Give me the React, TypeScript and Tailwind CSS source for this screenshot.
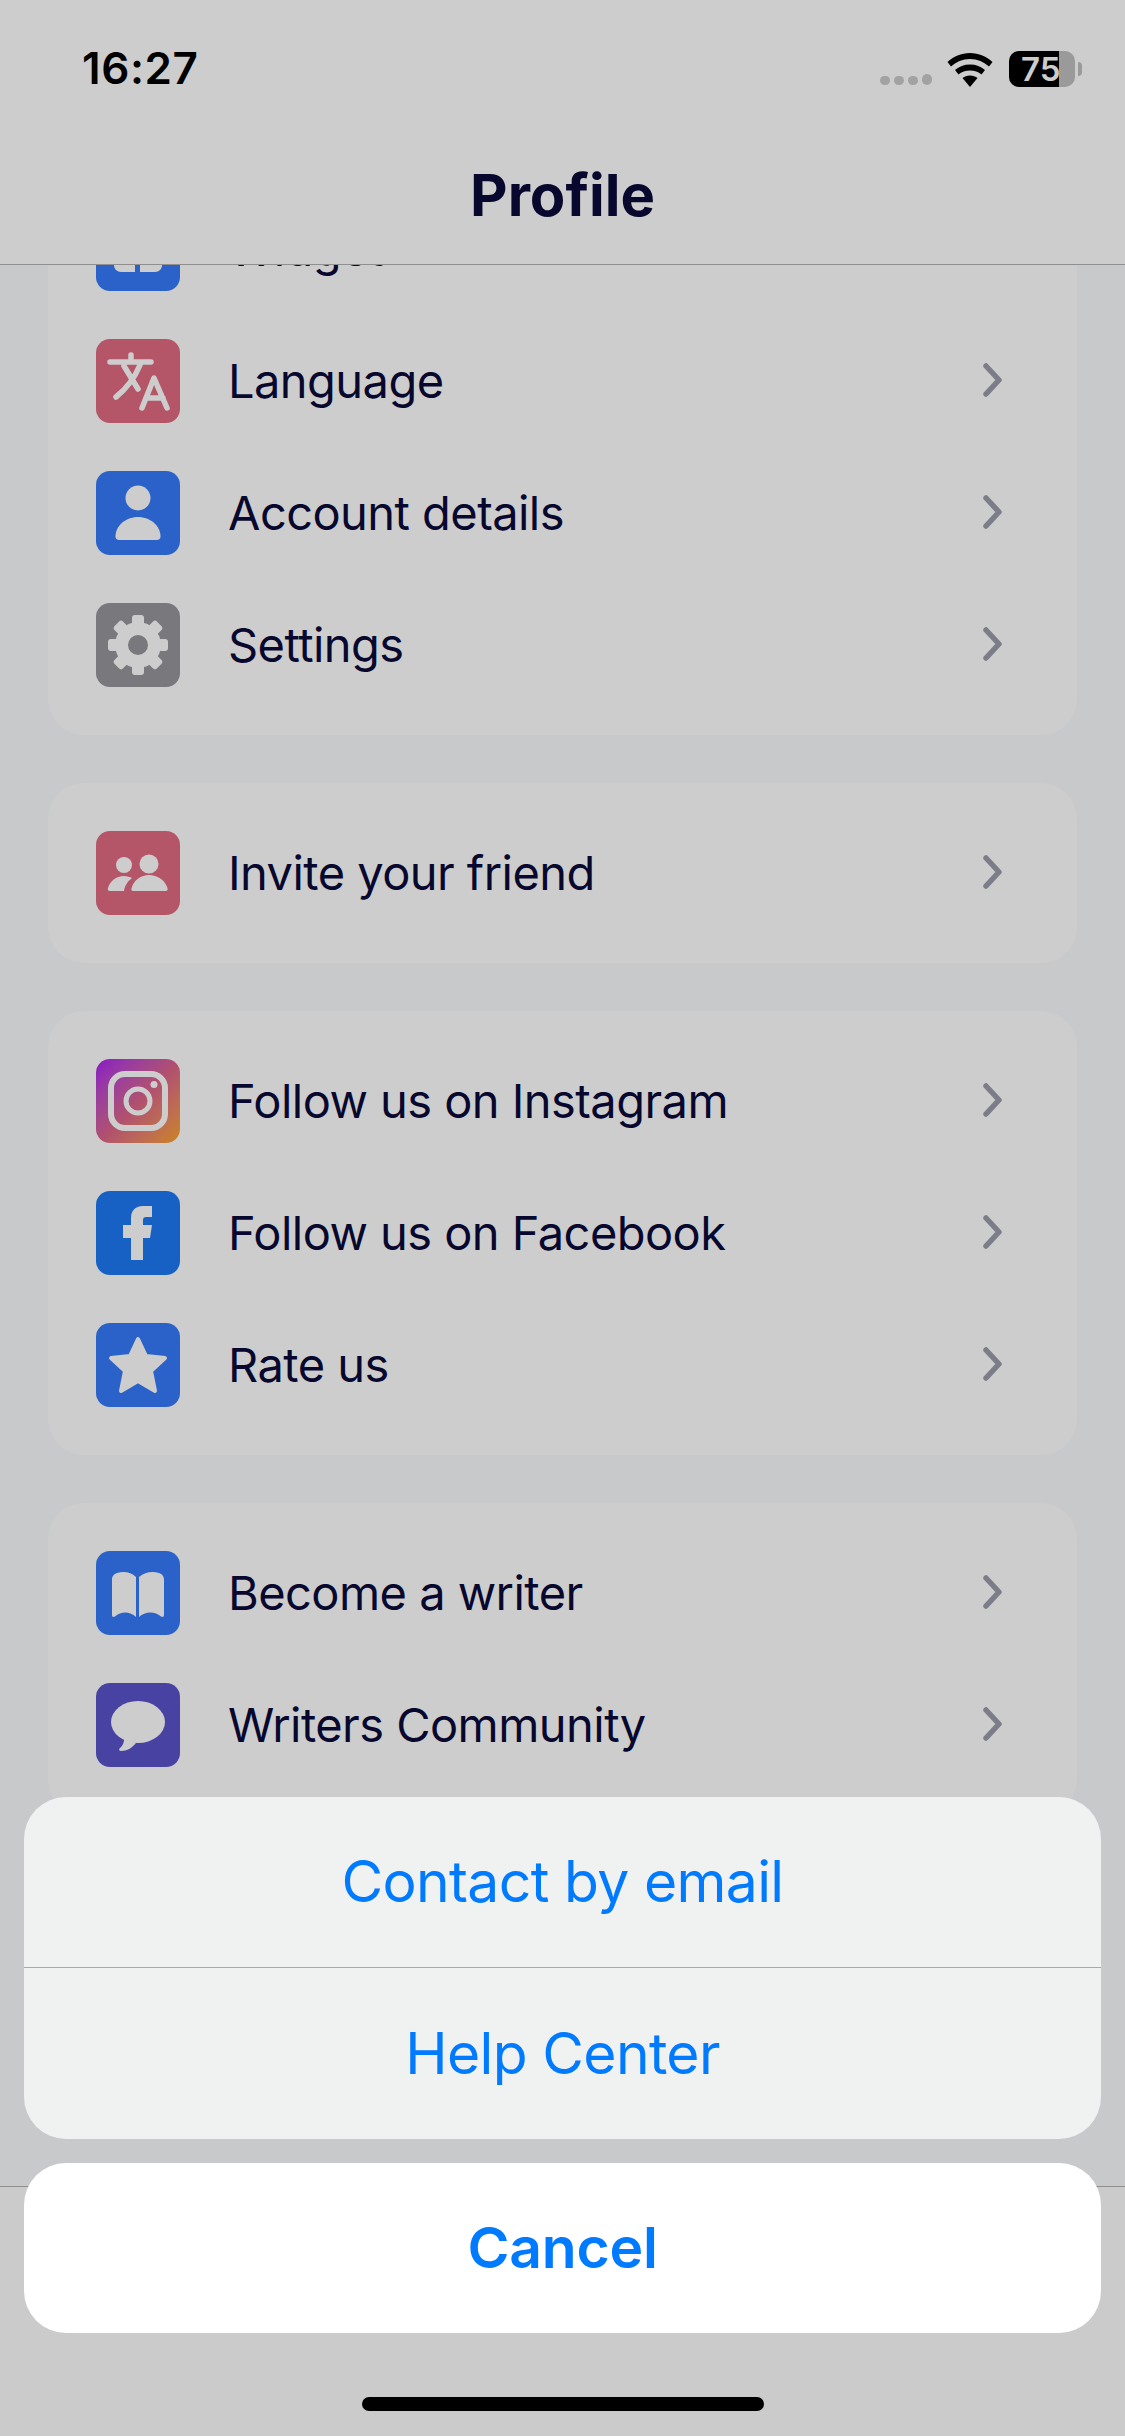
import type { FC, ReactNode } from "react";

const FONT = "font-['Inter','Liberation_Sans',sans-serif]";

const TranslateIcon = () => (
  <svg viewBox="0 0 84 84" className="h-full w-full" fill="none" stroke="#cdcdcd" strokeWidth="5.500" strokeLinecap="round" strokeLinejoin="round">
    <path d="M14 23H55M35 16V23M28 27L42 50M44 26C39 38 30 50 20 58" />
    <path d="M46 69L58 39L71 69M50 59H67" />
  </svg>
);

const PersonIcon = () => (
  <svg viewBox="0 0 84 84" className="h-full w-full" fill="#cdcdcd">
    <circle cx="42" cy="27" r="12.5" />
    <path d="M29 69H63C65.500 69 67 67.500 67 65.500C67 55 56 46 42 46S17 55 17 65.500C17 67.500 18.500 69 21 69Z" transform="translate(42 0) scale(0.9 1) translate(-42 0)" />
  </svg>
);

const GearIcon = () => (
  <svg viewBox="0 0 84 84" className="h-full w-full" fill="#cdcdcd">
    <circle cx="42" cy="42" r="23" />
    {[0, 45, 90, 135].map((angle) => (
      <rect key={angle} x="36" y="12" width="12" height="60" rx="3" transform={`rotate(${angle} 42 42)`} />
    ))}
    <circle cx="42" cy="42" r="10" fill="#78787d" />
  </svg>
);

const FriendsIcon = () => (
  <svg viewBox="0 0 84 84" className="h-full w-full" fill="#cdcdcd">
    <circle cx="53" cy="33" r="9.500" />
    <circle cx="28" cy="34" r="8" />
    <path d="M37 60C35 60 35 58 36 56C38 49 45 44 53 44C61 44 69 49 71.500 57C72 59 71 60 70 60Z" />
    <path d="M14 60C12 60 11.500 59 12 57C14 50 20 45 28 45C31 45 34 46 36 47C32 50 29 54 28 60Z" />
  </svg>
);

const InstagramIcon = () => (
  <svg viewBox="0 0 84 84" className="h-full w-full" fill="none" stroke="#cdcdcd" strokeWidth="6">
    <rect x="15" y="15" width="54" height="54" rx="14" />
    <circle cx="42" cy="42" r="12" strokeWidth="5" />
    <circle cx="58" cy="25.500" r="3.500" fill="#cdcdcd" stroke="none" />
  </svg>
);

const FacebookIcon = () => (
  <svg viewBox="0 0 84 84" className="h-full w-full" fill="#cdcdcd">
    <path d="M35 69V47H27V34H35V27C35 19 40 15 47 15H56V26H50C48 26 47 27 47 29V34H56L54 47H47V69Z" />
  </svg>
);

const StarIcon = () => (
  <svg viewBox="0 0 84 84" className="h-full w-full" fill="#cdcdcd" stroke="#cdcdcd" strokeWidth="4" strokeLinejoin="round">
    <path d="M42 16L50 33L69 35L55 48L59 68L42 58L25 68L29 48L15 35L34 33Z" />
  </svg>
);

const BookIcon = () => (
  <svg viewBox="0 0 84 84" className="h-full w-full" fill="#cdcdcd">
    <path d="M16 29C16 25 18 23 21 22C28 20 35 21 40 26V66C34 60 25 60 19 65.500C17.500 66.500 16 66 16 64Z" />
    <path d="M68 29C68 25 66 23 63 22C56 20 49 21 43 26V66C49 60 59 60 65 65.500C66.500 66.500 68 66 68 64Z" />
  </svg>
);

const BubbleIcon = () => (
  <svg viewBox="0 0 84 84" className="h-full w-full" fill="#cdcdcd">
    <ellipse cx="42" cy="39" rx="27" ry="21" />
    <path d="M28 54C28.500 60 26.500 63 23.500 65.500C22.500 67 23.500 68 25 68C31 68 36 65 40 60Z" />
  </svg>
);

const WidgetIcon = () => (
  <svg viewBox="0 0 84 84" className="h-full w-full" fill="#cdcdcd">
    <path d="M18 30H39V65H25C21 65 18 62 18 58Z" />
    <path d="M44 30H66V58C66 62 63 65 59 65H44Z" />
  </svg>
);

const Chevron = () => (
  <svg viewBox="0 0 19 34" className="mb-[3px] h-[34px] w-[19px] shrink-0" fill="none" stroke="#7d7d8a" strokeWidth="5.500" strokeLinecap="round" strokeLinejoin="round">
    <path d="M3 3L16 17L3 31" />
  </svg>
);

interface RowProps {
  label: string;
  color: string;
  icon: ReactNode;
}

const Row: FC<RowProps> = ({ label, color, icon }) => (
  <div className="flex h-[84px] items-center">
    <div className={`h-[84px] w-[84px] shrink-0 overflow-hidden rounded-[14px] ${color}`}>{icon}</div>
    <span className="mb-[1px] ml-[48px] flex-1 text-[47px] leading-none tracking-[-0.55px] text-[#08082f]">{label}</span>
    <Chevron />
  </div>
);

const Card: FC<{ rows: RowProps[] }> = ({ rows }) => (
  <div className="flex flex-col gap-12 rounded-[36px] bg-[#cdcdcd] py-12 pl-12 pr-[75px]">
    {rows.map((row) => (
      <Row key={row.label} {...row} />
    ))}
  </div>
);

const groups: RowProps[][] = [
  [
    { label: "Widget", color: "bg-[#2a62c9]", icon: <WidgetIcon /> },
    { label: "Language", color: "bg-[#b45668]", icon: <TranslateIcon /> },
    { label: "Account details", color: "bg-[#2a62c9]", icon: <PersonIcon /> },
    { label: "Settings", color: "bg-[#78787d]", icon: <GearIcon /> },
  ],
  [{ label: "Invite your friend", color: "bg-[#b45668]", icon: <FriendsIcon /> }],
  [
    {
      label: "Follow us on Instagram",
      color: "bg-linear-to-br from-[#8a0cc4] via-[#b04f70] to-[#cc8408]",
      icon: <InstagramIcon />,
    },
    { label: "Follow us on Facebook", color: "bg-[#1761c4]", icon: <FacebookIcon /> },
    { label: "Rate us", color: "bg-[#2a62c9]", icon: <StarIcon /> },
  ],
  [
    { label: "Become a writer", color: "bg-[#2a62c9]", icon: <BookIcon /> },
    { label: "Writers Community", color: "bg-[#4843a3]", icon: <BubbleIcon /> },
  ],
];

const StatusBar = () => (
  <div className="flex h-[100px] items-start justify-between pl-[82px] pr-[43px] pt-[46px]">
    <span className="-mt-[2px] text-[44px] font-semibold leading-[48px] tracking-[0.6px] text-black">16:27</span>
    <div className="flex items-end pt-[5px]">
      <div className="mb-[2px] flex items-end gap-[4px]">
        <span className="h-[9px] w-[10px] rounded-full bg-[#a2a2a2]" />
        <span className="h-[9px] w-[10px] rounded-full bg-[#a2a2a2]" />
        <span className="h-[9px] w-[10px] rounded-full bg-[#a2a2a2]" />
        <span className="h-[11px] w-[10px] rounded-full bg-[#a2a2a2]" />
      </div>
      <svg viewBox="0 0 46 34" className="ml-[15px] h-[34px] w-[46px]" fill="black">
        <path d="M23 0C14 0 6.500 3.500 0.500 9L4 13.500C9 9 15.500 6 23 6C30.500 6 37 9 42 13.500L45.500 9C39.500 3.500 32 0 23 0Z" />
        <path d="M23 11.500C17 11.500 12 13.500 8 17L11.500 21.500C14.500 19 18.500 17.500 23 17.500C27.500 17.500 31.500 19 34.500 21.500L38 17C34 13.500 29 11.500 23 11.500Z" />
        <path d="M23 22.500C20 22.500 17.500 23.500 15.500 25L23 34L30.500 25C28.500 23.500 26 22.500 23 22.500Z" />
      </svg>
      <div className="relative ml-[16px] flex h-[36px] w-[66px] rounded-[10px] bg-[#9a9a9a]">
        <div className="h-full w-[50px] rounded-l-[10px] bg-black" />
        <span className="absolute left-[12px] top-0 text-[33px] font-semibold leading-[36px] text-[#cdcdcd]">75</span>
      </div>
      <div className="mb-[11px] ml-[3px] h-[14px] w-[4px] rounded-r-full bg-[#9a9a9a]" />
    </div>
  </div>
);

export default function App() {
  return (
    <div className={`relative flex h-[2436px] w-[1125px] flex-col overflow-hidden bg-[#c8c9cb] ${FONT}`}>
      <header className="relative z-10 h-[265px] shrink-0 border-b border-[#8f8f8f] bg-[#cdcdcd]">
        <StatusBar />
        <h1 className="mt-[60px] text-center text-[58px] font-bold leading-[70px] text-[#08082f]">Profile</h1>
      </header>

      <main className="flex-1 overflow-hidden px-12">
        <div className="-mt-[106px] flex flex-col gap-12">
          {groups.map((rows) => (
            <Card key={rows[0].label} rows={rows} />
          ))}
        </div>
      </main>

      <div className="h-[250px] shrink-0 border-t border-[#8f8f8f] bg-[#cbcbcb]" />

      {/* action sheet */}
      <div className="absolute inset-x-0 bottom-0 z-20 flex flex-col px-6 pb-[25px]">
        <div className="flex flex-col divide-y divide-[#a9a9ab] rounded-[42px] bg-[#f0f1f1] text-center text-[57px] tracking-[-0.65px] text-[#007aff]">
          <div className="flex h-[171px] items-center justify-center">Contact by email</div>
          <div className="flex h-[171px] items-center justify-center">Help Center</div>
        </div>
        <div className="mt-6 flex h-[170px] items-center justify-center rounded-[42px] bg-white text-[57px] font-semibold tracking-[-0.2px] text-[#007aff]">
          Cancel
        </div>
        <div className="mx-auto mt-[64px] h-[14px] w-[402px] rounded-full bg-black" />
      </div>
    </div>
  );
}
